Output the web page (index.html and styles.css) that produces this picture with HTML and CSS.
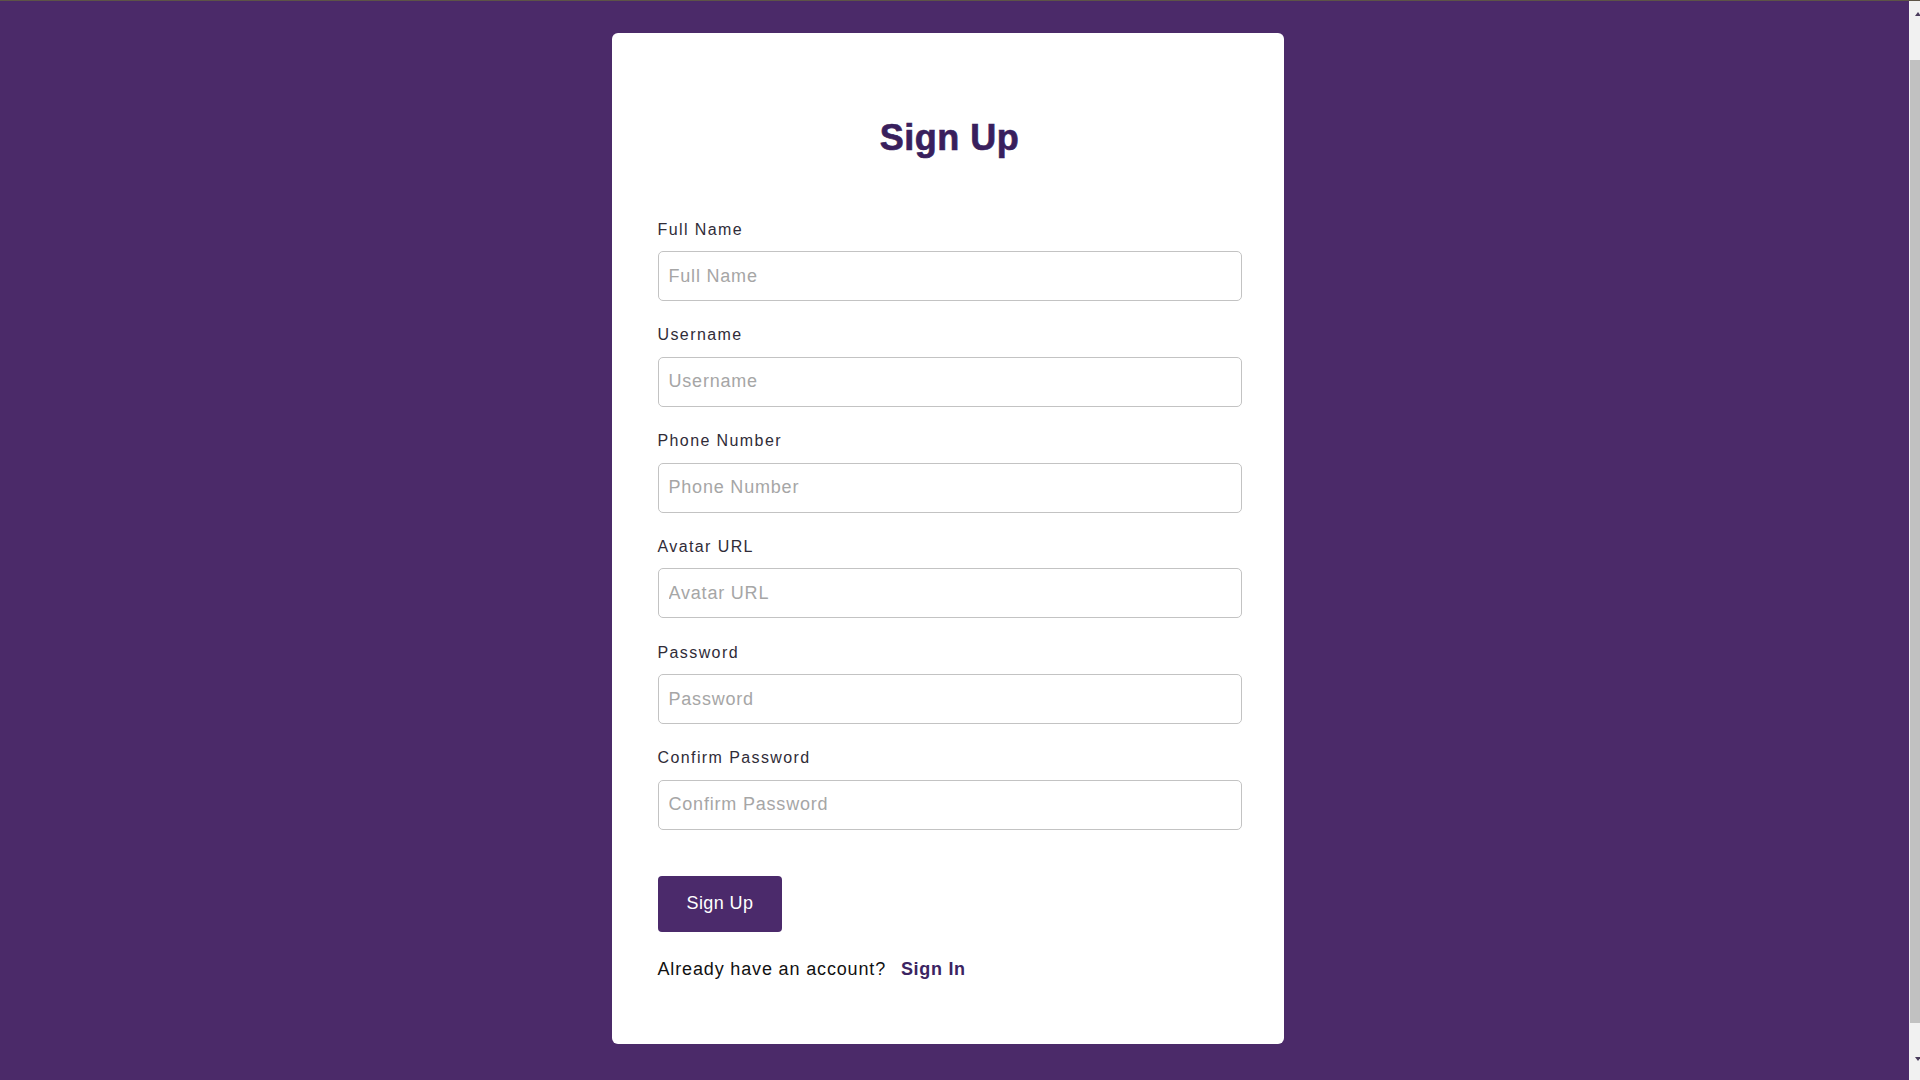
FILE: index.html
```html
<!DOCTYPE html>
<html lang="en">
<head>
<meta charset="utf-8">
<title>Sign Up</title>
<link rel="stylesheet" href="styles.css">
</head>
<body>
<main class="page">
  <section class="card">
    <h1 class="title">Sign Up</h1>
    <form class="form">
      <div class="field">
        <label class="label" for="fullname">Full Name</label>
        <input class="input" id="fullname" type="text" placeholder="Full Name">
      </div>
      <div class="field">
        <label class="label" for="username">Username</label>
        <input class="input" id="username" type="text" placeholder="Username">
      </div>
      <div class="field">
        <label class="label" for="phone">Phone Number</label>
        <input class="input" id="phone" type="text" placeholder="Phone Number">
      </div>
      <div class="field">
        <label class="label" for="avatar">Avatar URL</label>
        <input class="input" id="avatar" type="text" placeholder="Avatar URL">
      </div>
      <div class="field">
        <label class="label" for="password">Password</label>
        <input class="input" id="password" type="password" placeholder="Password">
      </div>
      <div class="field">
        <label class="label" for="confirm">Confirm Password</label>
        <input class="input" id="confirm" type="password" placeholder="Confirm Password">
      </div>
      <div class="actions">
        <button class="btn" type="button">Sign Up</button>
      </div>
    </form>
    <p class="footer">Already have an account? <a class="link" href="#">Sign In</a></p>
  </section>
</main>
<aside class="rail" aria-hidden="true">
  <div class="rail-btn"><span class="arrow-up"></span></div>
  <div class="thumb"></div>
  <div class="rail-btn rail-btn-bottom"><span class="arrow-down"></span></div>
</aside>
</body>
</html>
```

FILE: styles.css
```css
* {
  box-sizing: border-box;
}

html,
body {
  margin: 0;
  height: 100%;
}

body {
  display: flex;
  height: 1080px;
  overflow: hidden;
  background: #4b2a69;
  border-top: 1px solid #5d5447;
  font-family: "Liberation Sans", Arial, sans-serif;
}

.page {
  flex: 1;
  display: flex;
  justify-content: center;
  align-items: flex-start;
  padding: 32px 13px 0 0;
}

.card {
  width: 672px;
  background: #ffffff;
  border-radius: 6px;
  padding: 84px 42.5px 64.7px 45.5px;
}

.title {
  margin: 0 0 61.5px;
  font-size: 36px;
  line-height: 42px;
  font-weight: 700;
  text-align: center;
  letter-spacing: 0.5px;
  color: #391f5d;
  -webkit-text-stroke: 0.7px #391f5d;
}

.form {
  display: flex;
  flex-direction: column;
  margin: 0;
}

.field {
  display: flex;
  flex-direction: column;
  margin-bottom: 25.3px;
}

.label {
  display: block;
  font-size: 16px;
  line-height: 18px;
  letter-spacing: 1.4px;
  color: #302c38;
  margin-bottom: 12.5px;
}

.input {
  width: 100%;
  height: 50px;
  padding: 0 10px;
  border: 1px solid #c3c3c3;
  border-radius: 5px;
  background: #ffffff;
  font-family: "Liberation Sans", Arial, sans-serif;
  font-size: 18px;
  letter-spacing: 0.8px;
  color: #222;
  outline: none;
}

.input::placeholder {
  color: #a6a6a6;
}

.actions {
  display: flex;
  margin-top: 20.7px;
}

.btn {
  height: 56px;
  padding: 0 29px;
  border: none;
  border-radius: 4px;
  background: #4b2a6b;
  color: #ffffff;
  font-family: "Liberation Sans", Arial, sans-serif;
  font-size: 18px;
  letter-spacing: 0.4px;
  cursor: pointer;
}

.footer {
  margin: 25.8px 0 0;
  font-size: 18px;
  line-height: 22px;
  letter-spacing: 0.85px;
  color: #111111;
}

.link {
  margin-left: 9px;
  font-weight: 700;
  letter-spacing: 0.7px;
  color: #3b2462;
  text-decoration: none;
}

.rail {
  width: 11px;
  flex: 0 0 11px;
  display: flex;
  flex-direction: column;
  background: #f1f1f1;
  border-left: 1px solid #f7f7f7;
}

.rail-btn {
  height: 59px;
  display: flex;
  justify-content: center;
  padding-top: 11px;
}

.rail-btn-bottom {
  height: 57px;
  align-items: flex-end;
  padding-top: 0;
  padding-bottom: 19px;
}

.arrow-up {
  width: 0;
  height: 0;
  margin-left: 5px;
  border-left: 3px solid transparent;
  border-right: 3px solid transparent;
  border-bottom: 4px solid #4a3c5c;
}

.arrow-down {
  width: 0;
  height: 0;
  margin-left: 5px;
  border-left: 3px solid transparent;
  border-right: 3px solid transparent;
  border-top: 4px solid #4a3c5c;
}

.thumb {
  flex: 1;
  background: #c1c1c1;
}
```
